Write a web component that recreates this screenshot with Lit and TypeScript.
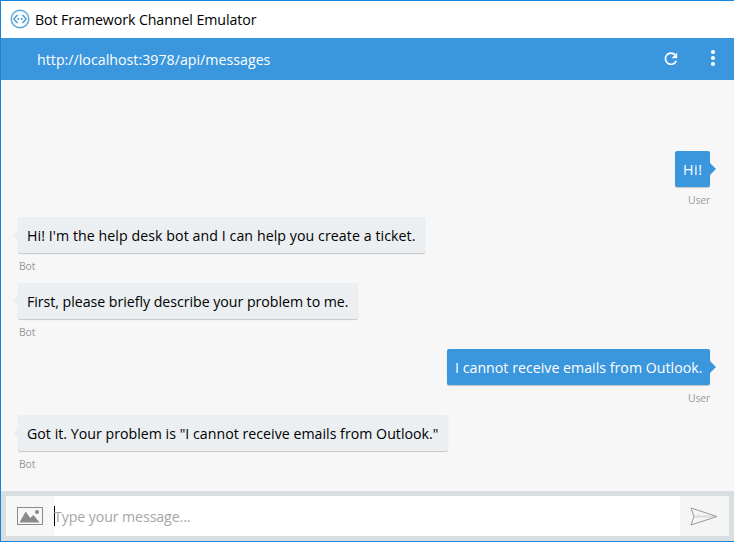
import { LitElement, html, css, svg } from "lit";
import { customElement, property } from "lit/decorators.js";
import { classMap } from "lit/directives/class-map.js";

interface Message {
  from: "Bot" | "User";
  text: string;
  width: number;
}

const MESSAGES: Message[] = [
  { from: "User", text: "Hi!", width: 35 },
  { from: "Bot", text: "Hi! I'm the help desk bot and I can help you create a ticket.", width: 407 },
  { from: "Bot", text: "First, please briefly describe your problem to me.", width: 340 },
  { from: "User", text: "I cannot receive emails from Outlook.", width: 263 },
  { from: "Bot", text: 'Got it. Your problem is "I cannot receive emails from Outlook."', width: 430 },
];

@customElement("chat-message")
export class ChatMessage extends LitElement {
  @property({ attribute: false }) message!: Message;

  static styles = css`
    :host { display: block; height: 66px; }
    .row { display: flex; flex-direction: column; align-items: flex-start; }
    .row.user { align-items: flex-end; }
    .bubble {
      position: relative;
      box-sizing: border-box;
      height: 36px;
      padding: 0 8px 0 9px;
      border-radius: 2px;
      background: #ebeff2;
      color: #000;
      font-size: 14.2px;
      line-height: 37px;
      white-space: nowrap;
      box-shadow: 0 1px 1px rgba(0, 0, 0, 0.2);
    }
    .user .bubble { background: #3a96dd; color: #fff; padding: 0 8px; }
    .tail { position: absolute; top: 12px; left: -5px; width: 6px; height: 12px; fill: #ebeff2; }
    .user .tail { left: auto; right: -6px; fill: #3a96dd; }
    .from { margin: 6px 1px 0; font-size: 10.4px; line-height: 14px; letter-spacing: -0.15px; color: #999; }
    .user .from { margin-right: 0; }
  `;

  firstUpdated() {
    this.fit();
    document.fonts.ready.then(() => this.fit());
  }

  /* Spreads the letters evenly so that the line fills its bubble. */
  private fit() {
    const label = this.renderRoot.querySelector<HTMLElement>(".text")!;
    label.style.letterSpacing = "0px";
    const own = label.getBoundingClientRect().width;
    const room = this.message.width - (this.message.from === "User" ? 15.5 : 18.5);
    label.style.letterSpacing = `${(room - own) / this.message.text.length}px`;
  }

  render() {
    const user = this.message.from === "User";
    return html`
      <div class=${classMap({ row: true, user })}>
        <div class="bubble" style="width:${this.message.width}px">
          <svg class="tail" viewBox="0 0 6 12"><path d=${user ? "M0 0L6 6L0 12Z" : "M6 0L0 6L6 12Z"} /></svg>
          <span class="text">${this.message.text}</span>
        </div>
        <div class="from">${this.message.from}</div>
      </div>
    `;
  }
}

const logo = svg`
  <circle cx="10" cy="10" r="8.8" fill="#f5fafd" stroke="#5fa6d8" stroke-width="1.4" />
  <path d="M7.5 6L3.8 10L7.5 14M12.5 6L16.2 10L12.5 14" fill="none" stroke="#4a97cf" stroke-width="1.3" />
  <circle cx="8.3" cy="10" r=".9" fill="#3d8fcb" /><circle cx="11.7" cy="10" r=".9" fill="#3d8fcb" />`;

@customElement("app-root")
export class AppRoot extends LitElement {
  static styles = css`
    :host {
      display: flex;
      flex-direction: column;
      box-sizing: border-box;
      width: 734px;
      height: 542px;
      overflow: hidden;
      border: 1px solid #1883d7;
      border-right: 0;
      background: #f7f7f7;
      font-family: "Open Sans", "Noto Sans", sans-serif;
    }
    .title { display: flex; align-items: center; height: 37px; padding-left: 9px; gap: 5px; background: #fff; font-size: 14.2px; letter-spacing: -0.08px; color: #000; }
    .logo { width: 20px; height: 20px; margin-top: -1px; }
    .address { display: flex; align-items: center; height: 42px; padding: 0 18px 0 36px; background: #3a96dd; color: #fff; }
    .url { flex: 1; font-size: 14.2px; letter-spacing: 0.02px; }
    .refresh { width: 14px; height: 14px; margin: 0 32px 1px 0; }
    .dots { width: 6px; height: 18px; margin-bottom: 3px; }
    .chat { flex: 1; padding: 71px 24px 0 17px; }
    .composer { display: flex; box-sizing: border-box; height: 50px; padding: 5px; background: #d9dee1; }
    .attach { display: flex; align-items: center; justify-content: center; width: 48px; background: #f7f7f7; }
    .attach svg { width: 26px; height: 18px; }
    .field { display: flex; align-items: center; flex: 1; background: #fff; }
    .caret { width: 1px; height: 20px; background: #000; }
    .hint { margin-left: -1px; font-size: 14.2px; letter-spacing: -0.1px; color: #a6a6a6; }
    .send { display: flex; align-items: center; justify-content: center; width: 49px; background: #f5f5f5; }
    .send svg { width: 28px; height: 19px; margin-right: 1px; }
  `;

  render() {
    return html`
      <div class="title"><svg class="logo" viewBox="0 0 20 20">${logo}</svg><span>Bot Framework Channel Emulator</span></div>
      <div class="address">
        <span class="url">http://localhost:3978/api/messages</span>
        <svg class="refresh" viewBox="0 0 14 14">
          <path d="M11.2 2.9A5.6 5.6 0 1 0 12.2 8.8" fill="none" stroke="#fff" stroke-width="1.7" />
          <path d="M13.2 .5V6.2H7.5Z" fill="#fff" />
        </svg>
        <svg class="dots" viewBox="0 0 6 18" fill="#fff">
          <circle cx="3" cy="3" r="2.1" /><circle cx="3" cy="9" r="2.1" /><circle cx="3" cy="15" r="2.1" />
        </svg>
      </div>
      <div class="chat">${MESSAGES.map((m) => html`<chat-message .message=${m}></chat-message>`)}</div>
      <div class="composer">
        <div class="attach">
          <svg viewBox="0 0 26 18">
            <rect x=".5" y=".5" width="25" height="17" fill="none" stroke="#8a8a8a" />
            <path d="M2.5 15.5L8.7 4.5L13.2 11L16.4 8L22.5 15.5Z" fill="#8a8a8a" />
            <circle cx="20" cy="5" r="2" fill="#8a8a8a" />
          </svg>
        </div>
        <div class="field"><span class="caret"></span><span class="hint">Type your message...</span></div>
        <div class="send">
          <svg viewBox="0 0 28 19" fill="none">
            <path d="M4 9.5H25" stroke="#dadada" stroke-width="2" />
            <path d="M1 1L27 9.5L1 18L4 9.5Z" stroke="#8f8f8f" stroke-width=".9" />
          </svg>
        </div>
      </div>
    `;
  }
}
